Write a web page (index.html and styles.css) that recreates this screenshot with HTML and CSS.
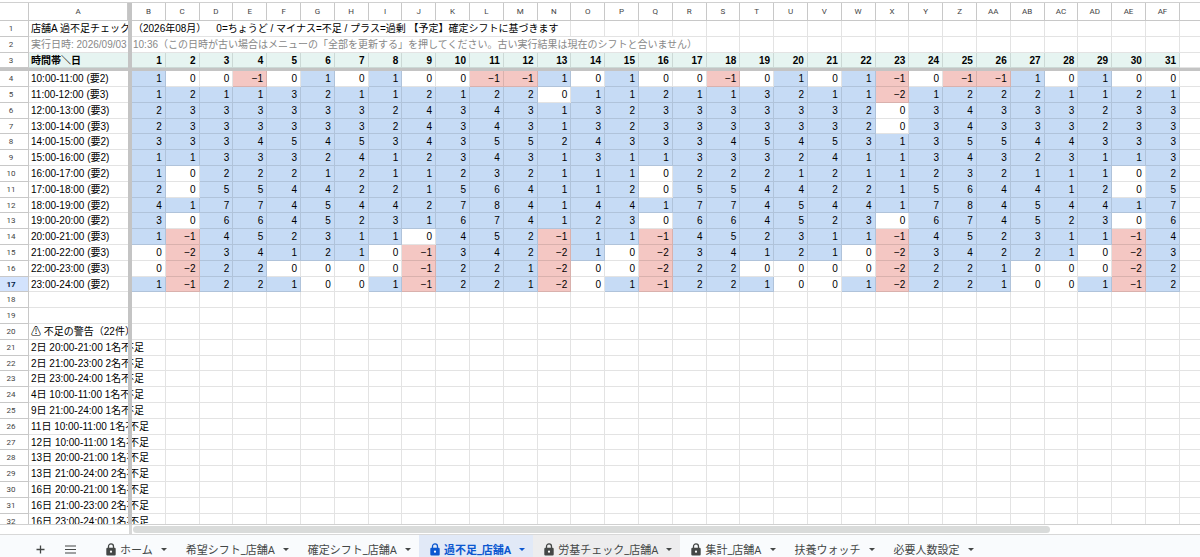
FILE: index.html
```html
<!DOCTYPE html>
<html lang="ja">
<head>
    <meta charset="UTF-8">
    <meta name="viewport" content="width=device-width, initial-scale=1.0">
    <title>過不足_店舗A</title>
    <link rel="stylesheet" href="styles.css">
</head>
<body>
    <main class="sheet">
        <table class="grid">
            <colgroup id="columns">
                <col class="col-number">
                <col class="col-label">
                <col class="col-freeze">
            </colgroup>
            <thead>
                <tr id="letters">
                    <th class="number"></th>
                    <th>A</th>
                    <td class="freeze"></td>
                </tr>
            </thead>
            <tbody id="rows"></tbody>
        </table>
    </main>
    <div class="scroll-row">
        <div class="scroll-left"></div>
        <div class="scroll-track"><div class="scroll-thumb"></div></div>
    </div>
    <nav class="tabs">
        <button class="tool" aria-label="シートを追加">
            <svg width="9" height="9" viewBox="0 0 9 9"><path d="M4.5 0.5v8M0.5 4.5h8" stroke="currentColor" stroke-width="1.3"/></svg>
        </button>
        <button class="tool" aria-label="すべてのシート">
            <svg width="11" height="9" viewBox="0 0 11 9"><path d="M0 1h11M0 4.5h11M0 8h11" stroke="currentColor" stroke-width="1.2"/></svg>
        </button>
        <div class="tab-list" id="tabs"></div>
    </nav>
<script>
    // difference between planned and required staff, one value per day
    let hours = [
        {label: "10:00-11:00 (要2)", values: "1 0 0 -1 0 1 0 1 0 0 -1 -1 1 0 1 0 0 -1 0 1 0 1 -1 0 -1 -1 1 0 1 0 0"},
        {label: "11:00-12:00 (要3)", values: "1 2 1 1 3 2 1 1 2 1 2 2 0 1 1 2 1 1 3 2 1 1 -2 1 2 2 2 1 1 2 1"},
        {label: "12:00-13:00 (要3)", values: "2 3 3 3 3 3 3 2 4 3 4 3 1 3 2 3 3 3 3 3 3 2 0 3 4 3 3 3 2 3 3"},
        {label: "13:00-14:00 (要3)", values: "2 3 3 3 3 3 3 2 4 3 4 3 1 3 2 3 3 3 3 3 3 2 0 3 4 3 3 3 2 3 3"},
        {label: "14:00-15:00 (要2)", values: "3 3 3 4 5 4 5 3 4 3 5 5 2 4 3 3 3 4 5 4 5 3 1 3 5 5 4 4 3 3 3"},
        {label: "15:00-16:00 (要2)", values: "1 1 3 3 3 2 4 1 2 3 4 3 1 3 1 1 3 3 3 2 4 1 1 3 4 3 2 3 1 1 3"},
        {label: "16:00-17:00 (要2)", values: "1 0 2 2 2 1 2 1 1 2 3 2 1 1 1 0 2 2 2 1 2 1 1 2 3 2 1 1 1 0 2"},
        {label: "17:00-18:00 (要2)", values: "2 0 5 5 4 4 2 2 1 5 6 4 1 1 2 0 5 5 4 4 2 2 1 5 6 4 4 1 2 0 5"},
        {label: "18:00-19:00 (要2)", values: "4 1 7 7 4 5 4 4 2 7 8 4 1 4 4 1 7 7 4 5 4 4 1 7 8 4 5 4 4 1 7"},
        {label: "19:00-20:00 (要2)", values: "3 0 6 6 4 5 2 3 1 6 7 4 1 2 3 0 6 6 4 5 2 3 0 6 7 4 5 2 3 0 6"},
        {label: "20:00-21:00 (要3)", values: "1 -1 4 5 2 3 1 1 0 4 5 2 -1 1 1 -1 4 5 2 3 1 1 -1 4 5 2 3 1 1 -1 4"},
        {label: "21:00-22:00 (要3)", values: "0 -2 3 4 1 2 1 0 -1 3 4 2 -2 1 0 -2 3 4 1 2 1 0 -2 3 4 2 2 1 0 -2 3"},
        {label: "22:00-23:00 (要3)", values: "0 -2 2 2 0 0 0 0 -1 2 2 1 -2 0 0 -2 2 2 0 0 0 0 -2 2 2 1 0 0 0 -2 2"},
        {label: "23:00-24:00 (要2)", values: "1 -1 2 2 1 0 0 1 -1 2 2 1 -2 0 1 -1 2 2 1 0 0 1 -2 2 2 1 0 0 1 -1 2"}
    ];
    let warnings = [
        "2日 20:00-21:00 1名", "2日 21:00-23:00 2名", "2日 23:00-24:00 1名",
        "4日 10:00-11:00 1名", "9日 21:00-24:00 1名", "11日 10:00-11:00 1名",
        "12日 10:00-11:00 1名", "13日 20:00-21:00 1名", "13日 21:00-24:00 2名",
        "16日 20:00-21:00 1名", "16日 21:00-23:00 2名", "16日 23:00-24:00 1名"
    ];
    let tabs = [
        {name: "ホーム", locked: true},
        {name: "希望シフト_店舗A"},
        {name: "確定シフト_店舗A"},
        {name: "過不足_店舗A", locked: true, state: "active"},
        {name: "労基チェック_店舗A", locked: true, state: "hovered"},
        {name: "集計_店舗A", locked: true},
        {name: "扶養ウォッチ"},
        {name: "必要人数設定"}
    ];
    const DAYS = 31;
    const SELECTED_ROW = 17;
    let rows = document.getElementById("rows");
    let rowNumber = 0;

    // column letters B to AF
    let cols = "";
    let letters = "";
    for(let i = 1; i <= DAYS; i++){
        let letter = i < 26 ? String.fromCharCode(65 + i) : "A" + String.fromCharCode(65 + i - 26);
        cols += "<col>";
        letters += "<th>" + letter + "</th>";
    }
    document.getElementById("columns").innerHTML += cols + '<col class="col-rest">';
    document.getElementById("letters").innerHTML += letters + '<th class="rest"></th>';

    // add one sheet row: number, column A, freeze line, day cells
    function addRow(label, cells, className){
        rowNumber++;
        let selected = rowNumber === SELECTED_ROW ? " selected" : "";
        rows.innerHTML += '<tr class="' + (className || "") + '">'
            + '<th class="number' + selected + '">' + rowNumber + "</th>"
            + '<td class="label">' + label + '</td><td class="freeze"></td>'
            + cells + '<td class="rest"></td></tr>';
    }
    function emptyCells(count){
        return "<td></td>".repeat(count);
    }

    addRow("店舗A 過不足チェック", '<td class="spill" colspan="13">（2026年08月）　0=ちょうど / マイナス=不足 / プラス=過剰 【予定】確定シフトに基づきます</td>' + emptyCells(18));
    addRow("実行日時: 2026/09/03", '<td class="spill" colspan="17">10:36（この日時が古い場合はメニューの「全部を更新する」を押してください。古い実行結果は現在のシフトと合いません）</td>' + emptyCells(14), "note");

    let days = "";
    for(let i = 1; i <= DAYS; i++){
        days += "<td>" + i + "</td>";
    }
    addRow("時間帯＼日", days, "days");
    rows.innerHTML += '<tr class="freeze-row"><td class="freeze" colspan="' + (DAYS + 4) + '"></td></tr>';

    hours.forEach(function(hour){
        let cells = hour.values.split(" ").map(function(value){
            let type = value > 0 ? "over" : value < 0 ? "short" : "even";
            return '<td class="' + type + '">' + value.replace("-", "−") + "</td>";
        });
        addRow(hour.label, cells.join(""));
    });
    addRow("", emptyCells(DAYS));
    addRow("", emptyCells(DAYS));
    addRow("⚠ 不足の警告（22件）", emptyCells(DAYS));

    // long warnings run on past the freeze line
    warnings.forEach(function(text){
        let cut = text.indexOf("日") === 1 ? "cut-more" : "cut";
        addRow(text + "不", '<td class="spill ' + cut + '">不足</td>' + emptyCells(DAYS - 1));
    });

    let lock = '<svg class="lock" width="10" height="13" viewBox="0 0 10 13"><path d="M2.5 5.5V3.4a2.5 2.5 0 0 1 5 0v2.1" fill="none" stroke="currentColor" stroke-width="1.3"/><rect x="0.3" y="4.8" width="9.4" height="7.8" rx="1.1" fill="currentColor"/><circle cx="5" cy="8.7" r="1.1" fill="#fff"/></svg>';
    let arrow = '<svg class="arrow" width="6" height="3" viewBox="0 0 6 3"><path d="M0 0h6L3 3z" fill="currentColor"/></svg>';
    document.getElementById("tabs").innerHTML = tabs.map(function(tab){
        return '<button class="tab ' + (tab.state || "") + '">' + (tab.locked ? lock : "") + "<span>" + tab.name + "</span>" + arrow + "</button>";
    }).join("");
</script>
</body>
</html>
```
FILE: styles.css
```css
* {
    box-sizing: border-box;
}
body {
    margin: 0;
    height: 100vh;
    display: flex;
    flex-direction: column;
    overflow: hidden;
    background-color: #fff;
    font-family: "Liberation Sans", "Noto Sans CJK JP", sans-serif;
    font-size: 10px;
    color: #000;
    text-spacing-trim: space-all;
}
.sheet {
    flex: 1;
    min-height: 0;
    margin-top: 2px;
    overflow: hidden;
    border-top: 1px solid #d0d0d0;
    border-bottom: 1px solid #d0d0d0;
}
.grid {
    width: 100%;
    table-layout: fixed;
    border-collapse: separate;
    border-spacing: 0;
    line-height: 13px;
}
.col-number {
    width: 29px;
}
.col-label {
    width: 99px;
}
.col-freeze {
    width: 4px;
}
.col-rest {
    width: 20px;
}
tr {
    height: 16px;
}
tbody tr:nth-child(5n+3) {
    height: 15px;
}
thead tr {
    height: 18px;
}
th, td {
    padding: 0 3px 0 0;
    border-right: 1px solid rgba(0,0,0,0.11);
    border-bottom: 1px solid rgba(0,0,0,0.11);
    text-align: right;
    white-space: nowrap;
}
th {
    padding: 0;
    border-color: #c8c8c8;
    font-family: Roboto, sans-serif;
    font-size: 8px;
    font-weight: 400;
    text-align: center;
    color: #444;
}
.number {
    padding-right: 6px;
}
.selected {
    background-color: #d3e3fd;
    font-weight: 700;
    color: #041e49;
}
.label {
    padding: 0 0 0 2px;
    border-right: none;
    text-align: left;
    overflow: hidden;
}
.rest {
    border-right: none;
}
.freeze {
    padding: 0;
    border: none;
    background-color: #c4c4c4;
}
tbody .freeze-row {
    height: 3px;
    line-height: 0;
}
.spill {
    padding: 0 0 0 1px;
    text-align: left;
    overflow: hidden;
}
.cut {
    text-indent: -4px;
}
.cut-more {
    text-indent: -9px;
}
.note {
    color: #888;
}
.days td:not(.freeze):not(.rest) {
    background-color: #e6f4f1;
    font-weight: 700;
}
.over {
    background-color: #c6dbf5;
}
.short {
    background-color: #f4c7c3;
}
.scroll-row {
    display: flex;
    height: 10px;
    border-bottom: 1px solid #d8d8d8;
}
.scroll-left {
    width: 132px;
    border-right: 3px solid #d8d8d8;
}
.scroll-track {
    flex: 1;
    padding: 1px;
}
.scroll-thumb {
    width: 86%;
    height: 7px;
    border-radius: 4px;
    background-color: #d9dbda;
}
.tabs {
    display: flex;
    height: 22px;
    padding-left: 25px;
    background-color: #f9fbfd;
}
.tab-list {
    display: flex;
    margin-left: 10px;
}
button {
    display: flex;
    align-items: center;
    height: 28px;
    border: none;
    background-color: transparent;
    color: #444746;
    cursor: pointer;
}
.tool {
    justify-content: center;
    width: 30px;
    padding: 0;
}
.tab {
    padding: 0 8px 0 11px;
    font-family: Roboto, "Noto Sans CJK JP", sans-serif;
    font-size: 11px;
    font-weight: 400;
    white-space: nowrap;
}
.lock {
    margin-right: 4px;
}
.arrow {
    margin-left: 8px;
}
.active {
    background-color: #e1e9f7;
    font-weight: 700;
    color: #0b57d0;
}
.hovered {
    background-color: #ededee;
}
```
